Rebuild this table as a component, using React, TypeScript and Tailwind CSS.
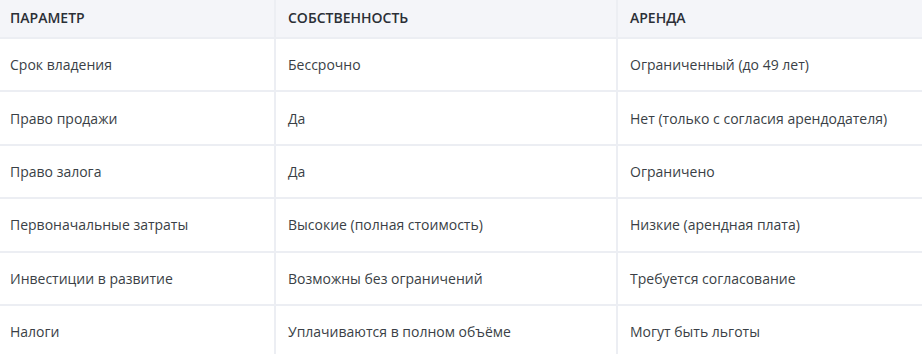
const rows = [
  ["Срок владения", "Бессрочно", "Ограниченный (до 49 лет)"],
  ["Право продажи", "Да", "Нет (только с согласия арендодателя)"],
  ["Право залога", "Да", "Ограничено"],
  ["Первоначальные затраты", "Высокие (полная стоимость)", "Низкие (арендная плата)"],
  ["Инвестиции в развитие", "Возможны без ограничений", "Требуется согласование"],
  ["Налоги", "Уплачиваются в полном объёме", "Могут быть льготы"],
];

const head = ["Параметр", "Собственность", "Аренда"];

export default function App() {
  return (
    <div
      className="w-[922px] h-[354px] overflow-hidden bg-white"
      style={{ fontFamily: '"Open Sans", "Noto Sans", sans-serif' }}
    >
      <div className="grid grid-cols-[274px_342px_1fr]">
        {/* HEADER */}
        {head.map((h, i) => (
          <div
            key={h}
            className={
              "h-[39px] pb-[2px] flex items-center bg-[#f4f5f9] border-b-2 border-[#eceef3] text-[14px] font-semibold uppercase text-[#2b2f36] " +
              (i === 0 ? "pl-[10px] pr-3" : "px-3 border-l-2")
            }
          >
            {h}
          </div>
        ))}

        {/* ROWS */}
        {rows.map((r, ri) =>
          r.map((c, i) => (
            <div
              key={ri + "-" + i}
              className={
                "h-[53.4px] flex items-center border-b-2 border-[#eceef3] text-[14px] text-[#3a3f46] " +
                (i === 0 ? "pl-[10px] pr-3" : "px-3 border-l-2")
              }
            >
              {c}
            </div>
          ))
        )}
      </div>
    </div>
  );
}
